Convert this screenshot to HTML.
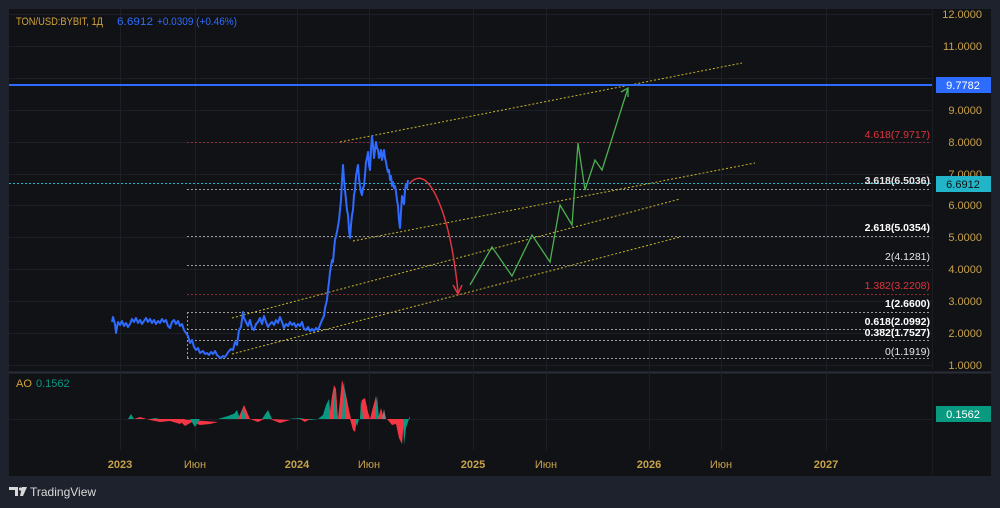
<!DOCTYPE html>
<html><head><meta charset="utf-8"><style>
html,body{margin:0;padding:0;background:#1e222d;width:1000px;height:508px;overflow:hidden;font-family:"Liberation Sans",sans-serif}
svg{position:absolute;left:0;top:0}
</style></head><body>
<svg width="1000" height="508" viewBox="0 0 1000 508" xmlns="http://www.w3.org/2000/svg" font-family="Liberation Sans, sans-serif">
<rect x="0" y="0" width="1000" height="508" fill="#1e222d"/>
<rect x="9" y="9" width="982" height="467" fill="#111216"/>
<line x1="9" y1="372.5" x2="991" y2="372.5" stroke="#2a2e39" stroke-width="2"/>
<line x1="932.5" y1="9" x2="932.5" y2="476" stroke="#1a1c22"/>
<g stroke="#1c1f27" stroke-width="1">
<line x1="9" y1="14.5" x2="932" y2="14.5"/><line x1="9" y1="46.5" x2="932" y2="46.5"/><line x1="9" y1="78.5" x2="932" y2="78.5"/><line x1="9" y1="110.5" x2="932" y2="110.5"/><line x1="9" y1="142.5" x2="932" y2="142.5"/><line x1="9" y1="174.5" x2="932" y2="174.5"/><line x1="9" y1="205.5" x2="932" y2="205.5"/><line x1="9" y1="237.5" x2="932" y2="237.5"/><line x1="9" y1="269.5" x2="932" y2="269.5"/><line x1="9" y1="301.5" x2="932" y2="301.5"/><line x1="9" y1="333.5" x2="932" y2="333.5"/><line x1="9" y1="365.5" x2="932" y2="365.5"/>
<line x1="9" y1="419.5" x2="932" y2="419.5"/>
<line x1="120.5" y1="9" x2="120.5" y2="450"/><line x1="195.5" y1="9" x2="195.5" y2="450"/><line x1="297.5" y1="9" x2="297.5" y2="450"/><line x1="369.5" y1="9" x2="369.5" y2="450"/><line x1="473.5" y1="9" x2="473.5" y2="450"/><line x1="546.5" y1="9" x2="546.5" y2="450"/><line x1="649.5" y1="9" x2="649.5" y2="450"/><line x1="721.5" y1="9" x2="721.5" y2="450"/><line x1="826.5" y1="9" x2="826.5" y2="450"/>
</g>
<g stroke-dasharray="2 2" stroke-width="1">
<line x1="187" y1="142.5" x2="930" y2="142.5" stroke="#8a2a33"/>
<line x1="187" y1="189.5" x2="930" y2="189.5" stroke="#9a9a9a"/>
<line x1="187" y1="236.5" x2="930" y2="236.5" stroke="#9a9a9a"/>
<line x1="187" y1="265.5" x2="930" y2="265.5" stroke="#9a9a9a"/>
<line x1="187" y1="294.5" x2="930" y2="294.5" stroke="#8a2a33"/>
<line x1="187" y1="312.5" x2="930" y2="312.5" stroke="#9a9a9a"/>
<line x1="187" y1="329.5" x2="930" y2="329.5" stroke="#9a9a9a"/>
<line x1="187" y1="340.5" x2="930" y2="340.5" stroke="#9a9a9a"/>
<line x1="187" y1="358.5" x2="930" y2="358.5" stroke="#9a9a9a"/>
<line x1="187.5" y1="312" x2="187.5" y2="359" stroke="#9a9a9a"/>
<line x1="9" y1="183.5" x2="932" y2="183.5" stroke="#22b5c9"/>
</g>
<g font-size="10.5" text-anchor="end" font-weight="bold">
<text x="930" y="138" fill="#e0343e" font-weight="normal">4.618(7.9717)</text>
<text x="930" y="184" fill="#e6e6e6">3.618(6.5036)</text>
<text x="930" y="231" fill="#ffffff">2.618(5.0354)</text>
<text x="930" y="260" fill="#e6e6e6" font-weight="normal">2(4.1281)</text>
<text x="930" y="289" fill="#e0343e" font-weight="normal">1.382(3.2208)</text>
<text x="930" y="307" fill="#ffffff">1(2.6600)</text>
<text x="930" y="325" fill="#ffffff">0.618(2.0992)</text>
<text x="930" y="336" fill="#ffffff">0.382(1.7527)</text>
<text x="930" y="355" fill="#e6e6e6" font-weight="normal">0(1.1919)</text>
</g>
<g stroke="#c9b62a" stroke-dasharray="2 2" stroke-width="1">
<line x1="340" y1="142" x2="742" y2="63"/>
<line x1="353" y1="241" x2="755" y2="163"/>
<line x1="232" y1="318" x2="680" y2="199"/>
<line x1="232" y1="354" x2="680" y2="237"/>
</g>
<line x1="9" y1="85" x2="932" y2="85" stroke="#2e6bff" stroke-width="2"/>
<polyline fill="none" stroke="#2f6bff" stroke-width="2" stroke-linejoin="round" points="112,322 113,317 115,324 116,333 118,322 120,325 122,321 124,326 126,323 128,327 130,324 132,319 134,322 136,318 138,323 140,320 142,324 144,321 146,318 148,322 150,319 152,323 154,320 156,324 158,321 160,323 162,319 164,322 166,320 168,326 170,328 172,322 174,320 176,324 178,321 180,326 182,324 184,330 186,333 188,336 190,343 192,340 194,347 196,350 198,348 200,353 203,351 205,354 207,353 209,355 211,352 213,354 215,351 217,355 219,357 221,358 223,356 225,357 227,354 229,351 231,349 233,350 235,342 237,345 239,330 241,327 243,312 244,318 246,322 248,326 250,320 252,328 254,330 256,324 258,322 260,318 262,324 264,316 266,322 268,327 270,324 272,322 274,325 276,320 278,323 280,317 282,322 284,328 286,324 288,326 290,322 292,325 294,323 296,327 298,324 300,326 302,322 304,329 306,330 308,327 310,331 312,329 314,331 316,328 318,330 320,325 322,320 324,316 325,308 327,300 328,290 329,282 330,272 331,266 332,260 333,262 334,250 335,240 336,236 337,232 338,226 339,220 340,210 341,200 342,180 343,165 344,180 345,190 346,200 347,210 348,215 349,230 350,238 351,225 352,215 353,210 354,195 355,190 356,176 357,170 358,165 359,178 360,186 361,192 362,195 363,188 364,186 365,175 366,162 367,158 368,152 369,165 370,170 371,150 372,136 373,145 374,158 375,150 376,142 377,148 378,150 379,158 380,155 381,150 382,160 383,155 384,150 385,158 386,162 387,168 388,172 389,170 390,180 391,176 392,186 393,182 394,188 395,186 396,192 397,200 398,206 399,220 400,228 401,212 402,196 403,200 404,204 405,190 406,184 407,188 408,180"/>
<path d="M410,183 Q424,168 438,200 T458,292" fill="none" stroke="#e0343e" stroke-width="1.5"/>
<path d="M453,285 L458,294 L462,285" fill="none" stroke="#e0343e" stroke-width="1.5"/>
<polyline fill="none" stroke="#4caf50" stroke-width="1.3" points="470,285 492,247 512,276 532,235 550,262 560,205 572,225 578,143 585,190 595,160 602,170 628,88"/>
<path d="M621,92 L628,88 L628,97" fill="none" stroke="#4caf50" stroke-width="1.3"/>
<g>
<polygon fill="#089981" points="128,419 131,414 134,419"/>
<polygon fill="#f23645" points="134,419 140,417 150,420 160,422 170,421 180,424 185,419"/>
<polygon fill="#089981" points="150,419 155,418 160,419"/>
<polygon fill="#f23645" points="178,419 185,426 192,422 200,425 210,424 218,422"/>
<polygon fill="#089981" points="190,419 195,427 200,419"/>
<polygon fill="#089981" points="218,419 228,416 236,413 239,419"/>
<polygon fill="#089981" points="230,419 237,410 240,419"/>
<polygon fill="#f23645" points="238,419 244,405 250,419"/>
<polygon fill="#089981" points="241,419 243,408 246,419"/>
<polygon fill="#f23645" points="250,419 258,422 264,419"/>
<polygon fill="#089981" points="262,419 268,410 272,419"/>
<polygon fill="#f23645" points="270,419 280,423 290,420"/>
<polygon fill="#089981" points="288,419 300,418 310,420 318,419"/>
<polygon fill="#f23645" points="300,419 305,422 310,419"/>
<polygon fill="#089981" points="318,419 323,415 326,405 329,399 331,419"/>
<polygon fill="#f23645" points="329,419 332,396 334,385 336,389 338,419"/>
<polygon fill="#089981" points="333,419 335,388 337,419"/>
<polygon fill="#f23645" points="338,419 342,380 345,390 349,410 351,419"/>
<polygon fill="#089981" points="342,419 344,380 346,419"/>
<polygon fill="#f23645" points="350,419 353,430 355,432 357,419"/>
<polygon fill="#089981" points="355,419 357,426 359,419"/>
<polygon fill="#f23645" points="360,419 362,400 365,398 368,412 370,419"/>
<polygon fill="#089981" points="360,419 361,399 363,419"/>
<polygon fill="#f23645" points="370,419 373,407 376,396 378,419"/>
<polygon fill="#089981" points="375,419 377,395 379,419"/>
<polygon fill="#f23645" points="378,419 381,408 384,419"/>
<polygon fill="#808080" points="382,419 384,409 386,419"/>
<polygon fill="#f23645" points="387,419 392,425 396,424 399,438 402,444 404,419"/>
<polygon fill="#089981" points="403,419 404,445 406,428 410,416 410,419"/>
</g>
<g font-size="11" fill="#c8a24a" text-anchor="end">
<text x="982" y="18">12.0000</text><text x="982" y="50">11.0000</text><text x="982" y="114">9.0000</text><text x="982" y="146">8.0000</text><text x="982" y="178">7.0000</text><text x="982" y="209">6.0000</text><text x="982" y="241">5.0000</text><text x="982" y="273">4.0000</text><text x="982" y="305">3.0000</text><text x="982" y="337">2.0000</text><text x="982" y="369">1.0000</text>
</g>
<rect x="936" y="77" width="55" height="16" fill="#2e6bff"/>
<text x="963" y="89" font-size="11" fill="#fff" text-anchor="middle">9.7782</text>
<rect x="936" y="176" width="55" height="16" fill="#22b5c9"/>
<text x="963" y="188" font-size="11" fill="#111" text-anchor="middle">6.6912</text>
<rect x="936" y="406" width="55" height="16" fill="#089981"/>
<text x="963" y="418" font-size="11" fill="#fff" text-anchor="middle">0.1562</text>
<g font-size="11" fill="#c8a24a" text-anchor="middle">
<text x="120" y="468" font-weight="bold">2023</text><text x="195" y="468">Июн</text><text x="297" y="468" font-weight="bold">2024</text><text x="369" y="468">Июн</text><text x="473" y="468" font-weight="bold">2025</text><text x="546" y="468">Июн</text><text x="649" y="468" font-weight="bold">2026</text><text x="721" y="468">Июн</text><text x="826" y="468" font-weight="bold">2027</text>
</g>
<text x="16" y="25" font-size="11" fill="#d1a23a" textLength="87" lengthAdjust="spacingAndGlyphs">TON/USD:BYBIT, 1Д</text>
<text x="117" y="25" font-size="11" fill="#2e6bff" textLength="36" lengthAdjust="spacingAndGlyphs">6.6912</text>
<text x="157" y="25" font-size="11" fill="#2e6bff" textLength="80" lengthAdjust="spacingAndGlyphs">+0.0309 (+0.46%)</text>
<text x="16" y="387" font-size="11" fill="#d1a23a">AO</text>
<text x="36" y="387" font-size="11" fill="#089981">0.1562</text>
<path d="M9,487 h9 v9 h-3 v-6 h-6z" fill="#d9d9d9"/>
<circle cx="20.5" cy="489" r="1.6" fill="#d9d9d9"/>
<path d="M22,487 h5 l-4,9 h-3z" fill="#d9d9d9"/>
<text x="30" y="496" font-size="12" fill="#d9d9d9">TradingView</text>
</svg>
</body></html>
